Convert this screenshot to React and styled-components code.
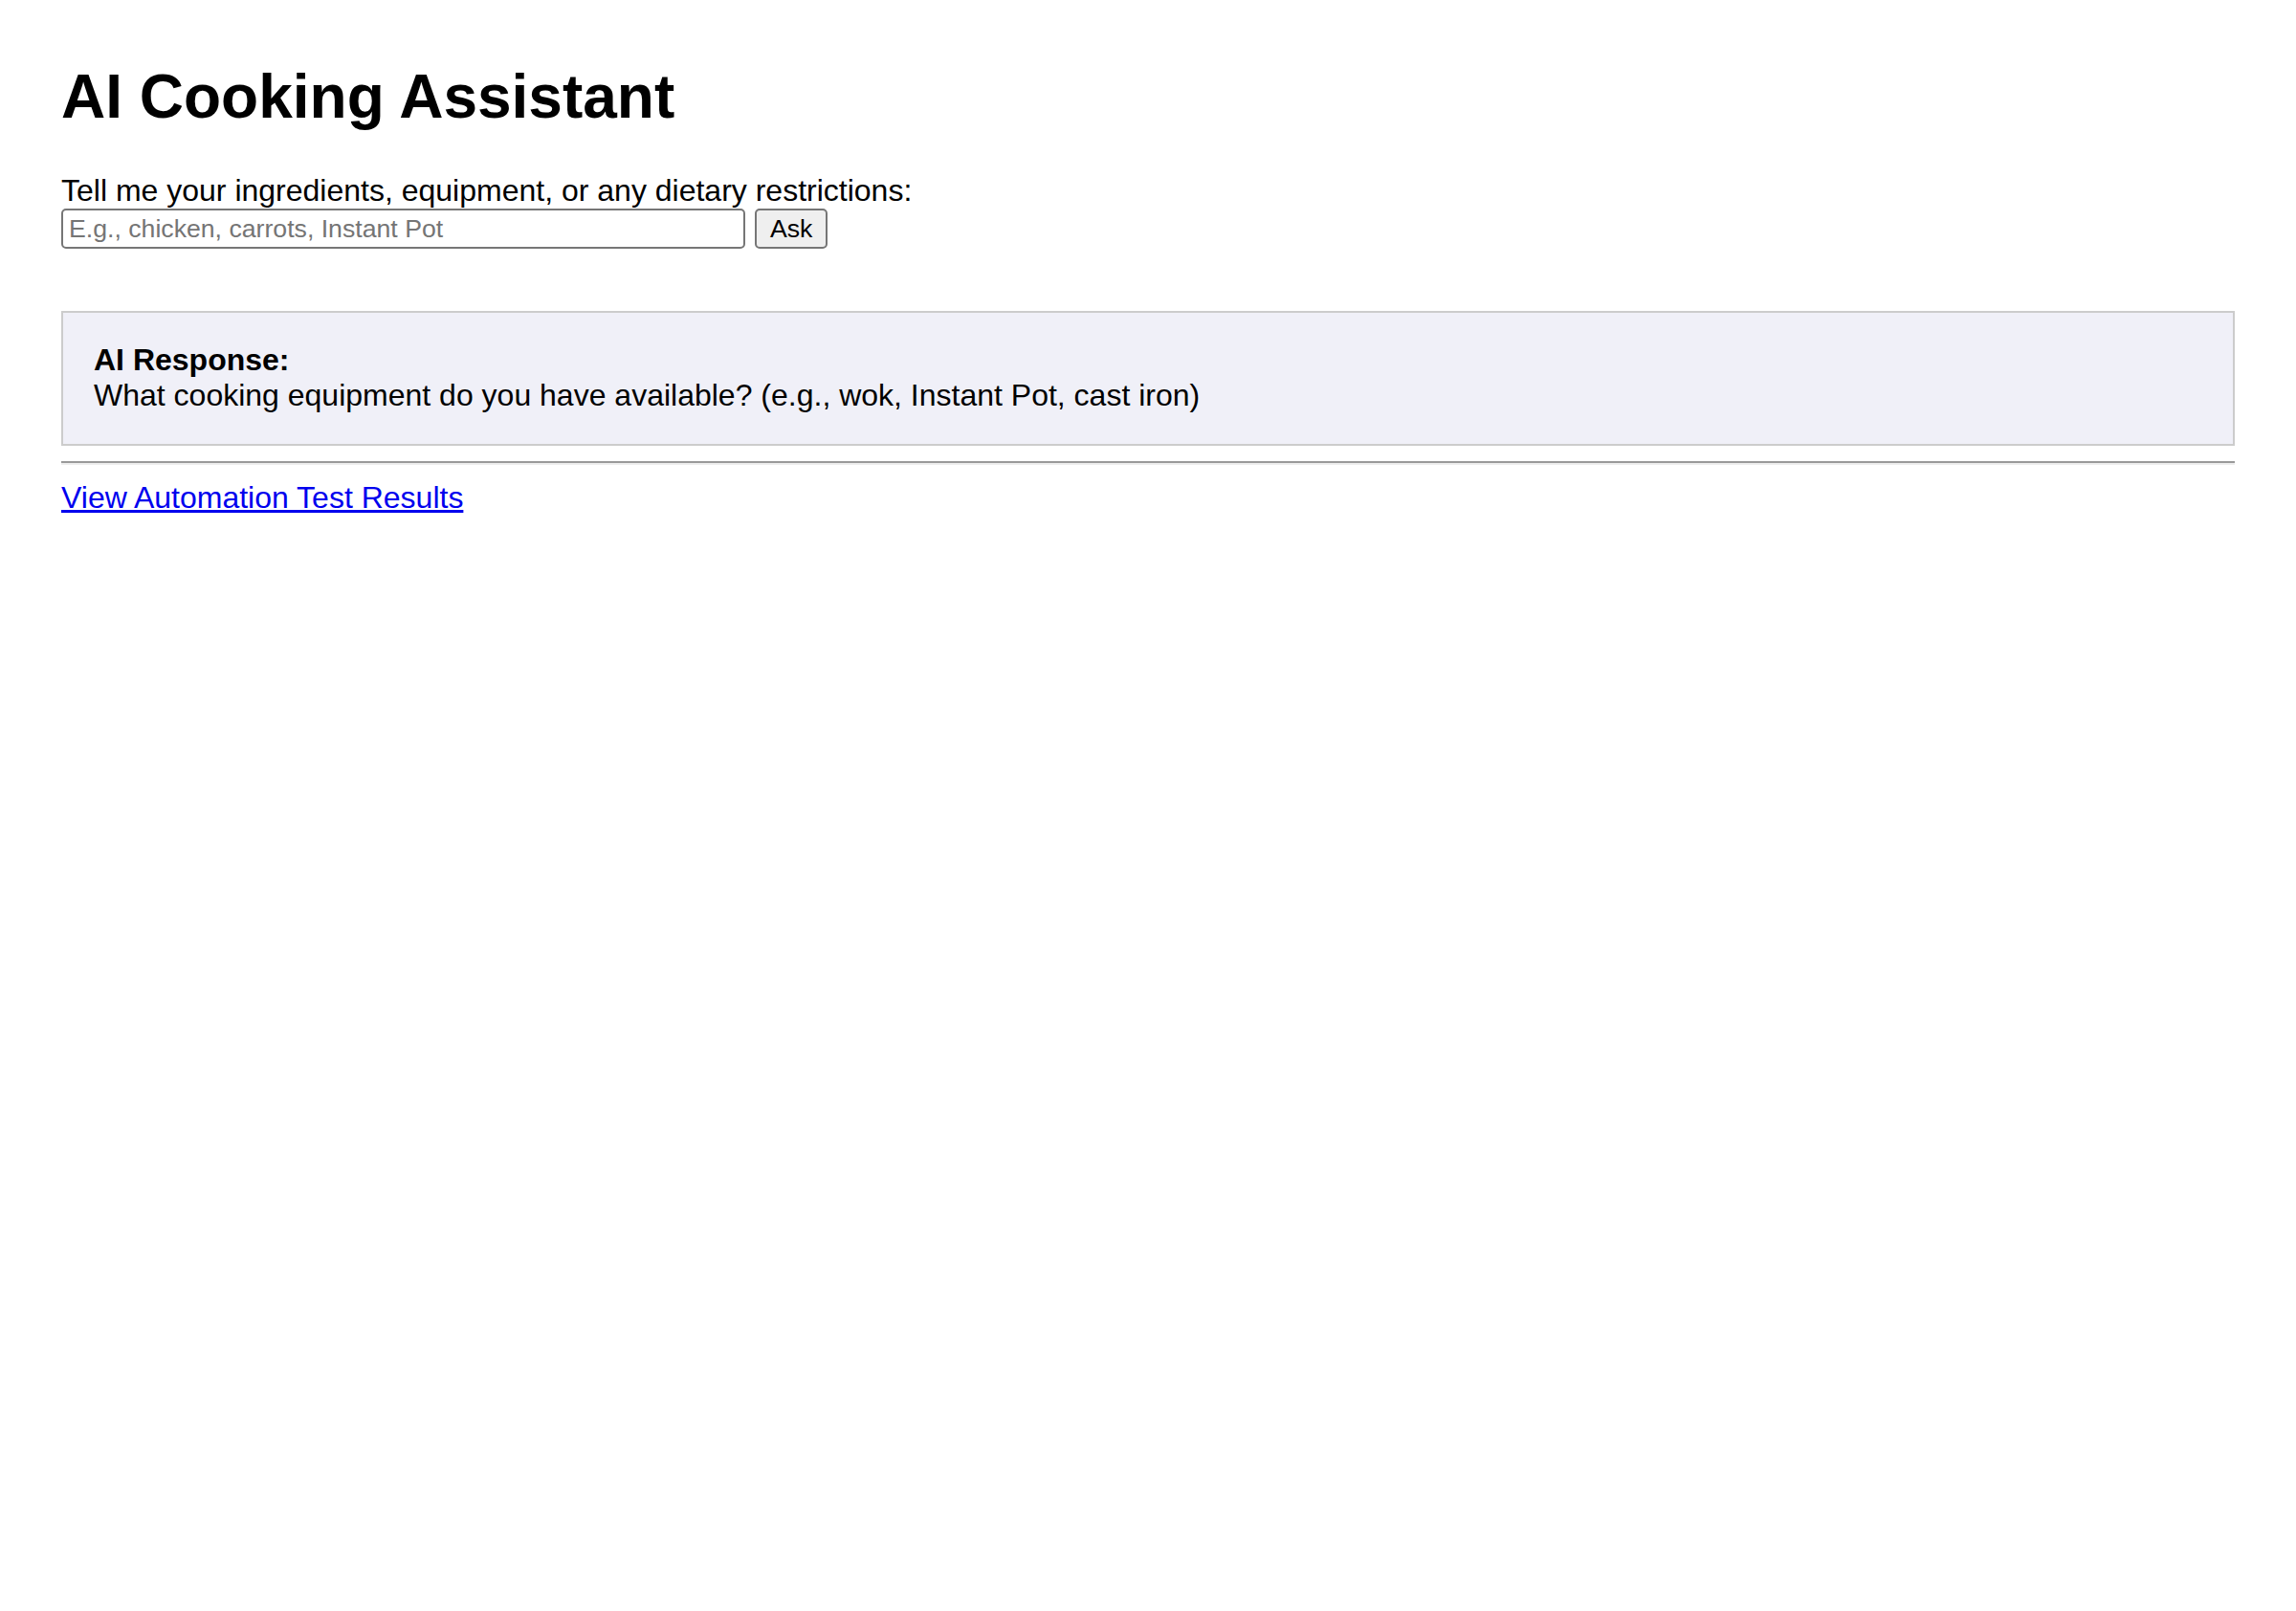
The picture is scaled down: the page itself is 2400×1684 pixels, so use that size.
import React, {useState} from 'react';
import styled, {createGlobalStyle} from 'styled-components';

const GlobalStyle = createGlobalStyle`
    body {
        margin: 0;
        background: #ffffff;
        color: #000000;
        font-family: "Liberation Sans", Arial, sans-serif;
        font-size: 32px;
    }
`;

const Page = styled.main`
    padding: 64px;
`;

const Title = styled.h1`
    font-size: 64px;
    font-weight: bold;
    margin: 0 0 43px;
    line-height: normal;
`;

const AskForm = styled.form`
    display: flex;
    flex-direction: column;
    margin: 0;
`;

const Label = styled.label`
    display: block;
    line-height: normal;
`;

const InputRow = styled.div`
    display: flex;
    gap: 10px;
    height: 42px;
`;

const TextInput = styled.input`
    box-sizing: border-box;
    width: 715px;
    height: 42px;
    padding: 0 6px;
    border: 2px solid #767676;
    border-radius: 5px;
    font-family: "Liberation Sans", Arial, sans-serif;
    font-size: 26.67px;
    color: #000;
    background: #fff;
    outline: none;

    &::placeholder {
        color: #757575;
    }
`;

const AskButton = styled.button`
    box-sizing: border-box;
    height: 42px;
    padding: 0 14px;
    border: 2px solid #767676;
    border-radius: 5px;
    background: #efefef;
    color: #000;
    font-family: "Liberation Sans", Arial, sans-serif;
    font-size: 26.67px;
    cursor: pointer;
`;

const ResponseBox = styled.section`
    margin-top: 65px;
    padding: 31px 32px 32px;
    border: 2px solid #cccccc;
    background: #f0f0f8;
    line-height: normal;
`;

const ResponseHeading = styled.strong`
    display: block;
    font-weight: bold;
`;

const Divider = styled.hr`
    margin: 16px 0;
    height: 0;
    border: none;
    border-top: 2px solid #9a9a9a;
    border-bottom: 2px solid #eeeeee;
`;

const ResultsLink = styled.a`
    color: #0000ee;
    text-decoration: underline;
    line-height: normal;
`;

const App = () => {
    const [query, setQuery] = useState('');

    const handleSubmit = (event) => {
        event.preventDefault();
    };

    return (
        <>
            <GlobalStyle />
            <Page>
                <Title>AI Cooking Assistant</Title>
                <AskForm onSubmit={handleSubmit}>
                    <Label htmlFor="ingredients">
                        Tell me your ingredients, equipment, or any dietary restrictions:
                    </Label>
                    <InputRow>
                        <TextInput
                            id="ingredients"
                            value={query}
                            onChange={(e) => setQuery(e.target.value)}
                            placeholder="E.g., chicken, carrots, Instant Pot"
                        />
                        <AskButton type="submit">Ask</AskButton>
                    </InputRow>
                </AskForm>
                <ResponseBox>
                    <ResponseHeading>AI Response:</ResponseHeading>
                    What cooking equipment do you have available? (e.g., wok, Instant Pot, cast iron)
                </ResponseBox>
                <Divider />
                <ResultsLink href="#results">View Automation Test Results</ResultsLink>
            </Page>
        </>
    );
};

export default App;
